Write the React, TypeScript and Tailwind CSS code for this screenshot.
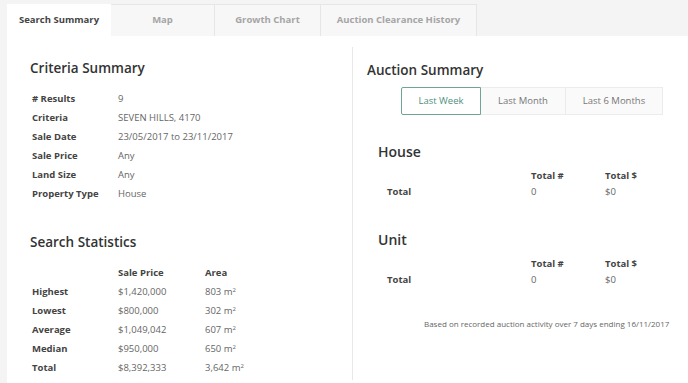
import React from "react";

const tabs = ["Search Summary", "Map", "Growth Chart", "Auction Clearance History"];
const tabWidths = ["w-[104px]", "w-[104px]", "w-[106px]", "w-[156px]"];

const criteria: [string, string][] = [
  ["# Results", "9"],
  ["Criteria", "SEVEN HILLS, 4170"],
  ["Sale Date", "23/05/2017 to 23/11/2017"],
  ["Sale Price", "Any"],
  ["Land Size", "Any"],
  ["Property Type", "House"],
];

const stats: [string, string, string][] = [
  ["Highest", "$1,420,000", "803"],
  ["Lowest", "$800,000", "302"],
  ["Average", "$1,049,042", "607"],
  ["Median", "$950,000", "650"],
  ["Total", "$8,392,333", "3,642"],
];

function AuctionBlock({ title }: { title: string }) {
  return (
    <div>
      <h3 className="text-[14px] font-semibold text-[#333] pl-[11px] leading-[20px]">{title}</h3>
      <div className="grid grid-cols-[144px_74px_60px] text-[9.5px] leading-[16px] pl-[20px] mt-[6px]">
        <div />
        <div className="font-bold text-[#444]">Total #</div>
        <div className="font-bold text-[#444]">Total $</div>
        <div className="font-bold text-[#444]">Total</div>
        <div className="text-[#666]">0</div>
        <div className="text-[#666]">$0</div>
      </div>
    </div>
  );
}

export default function App() {
  return (
    <div className="w-[688px] h-[383px] overflow-hidden bg-[#f4f4f4] font-['Open_Sans',sans-serif]">
      {/* tabs */}
      <div className="flex pl-[7px] pt-[4px] h-[36px]">
        {tabs.map((t, i) => (
          <div
            key={t}
            className={`${tabWidths[i]} flex items-center justify-center text-[9.5px] font-bold ${
              i === 0
                ? "bg-white text-[#444]"
                : "bg-[#f7f7f7] text-[#a5a5a5] border-t border-r border-[#e6e6e6]"
            }`}
          >
            {t}
          </div>
        ))}
      </div>

      <div className="ml-[7px] bg-white h-[347px] flex">
        {/* left column */}
        <div className="w-[345px] pl-[23px] pt-[22px]">
          <h2 className="text-[13.5px] font-semibold text-[#333] leading-[20px]">Criteria Summary</h2>
          <div className="grid grid-cols-[86px_1fr] text-[9.5px] leading-[19px] pl-[2px] mt-[11px]">
            {criteria.map(([k, v]) => (
              <React.Fragment key={k}>
                <div className="font-bold text-[#444]">{k}</div>
                <div className="text-[#666]">{v}</div>
              </React.Fragment>
            ))}
          </div>

          <h2 className="text-[13.5px] font-semibold text-[#333] leading-[20px] mt-[29px]">Search Statistics</h2>
          <div className="grid grid-cols-[86px_87px_1fr] text-[9.5px] leading-[19px] pl-[2px] mt-[11px]">
            <div />
            <div className="font-bold text-[#444]">Sale Price</div>
            <div className="font-bold text-[#444]">Area</div>
            {stats.map(([k, p, a]) => (
              <React.Fragment key={k}>
                <div className="font-bold text-[#444]">{k}</div>
                <div className="text-[#666]">{p}</div>
                <div className="text-[#666]">
                  {a} m<sup className="text-[6px]">2</sup>
                </div>
              </React.Fragment>
            ))}
          </div>
        </div>

        {/* right column */}
        <div className="flex-1 border-l border-[#e8e8e8] mt-[11px] mb-[3px] pl-[14px] pt-[13px]">
          <h2 className="text-[13.5px] font-semibold text-[#333] leading-[20px]">Auction Summary</h2>
          <div className="flex ml-[34px] mt-[7px] text-[9.5px]">
            <div className="w-[80px] h-[28px] flex items-center justify-center border border-[#6fa596] rounded-l-[2px] text-[#4f8f7d]">
              Last Week
            </div>
            <div className="w-[85px] h-[28px] flex items-center justify-center border-y border-r border-[#ececec] bg-[#fafafa] text-[#777]">
              Last Month
            </div>
            <div className="w-[97px] h-[28px] flex items-center justify-center border-y border-r border-[#ececec] bg-[#fafafa] text-[#777]">
              Last 6 Months
            </div>
          </div>

          <div className="mt-[27px]">
            <AuctionBlock title="House" />
          </div>
          <div className="mt-[30px]">
            <AuctionBlock title="Unit" />
          </div>

          <p className="text-[8px] text-[#666] pl-[57px] mt-[30px]">
            Based on recorded auction activity over 7 days ending 16/11/2017
          </p>
        </div>
      </div>
    </div>
  );
}
